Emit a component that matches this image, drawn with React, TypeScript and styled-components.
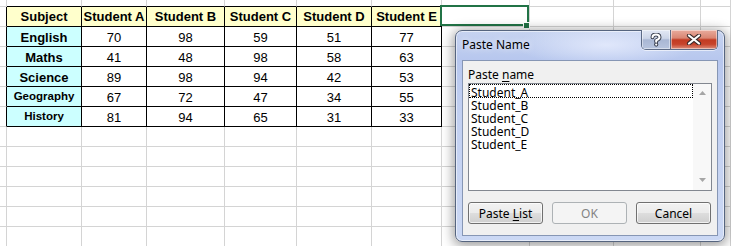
import React from 'react';
import styled, { createGlobalStyle, css } from 'styled-components';

const GlobalStyle = createGlobalStyle`
  html, body { margin: 0; padding: 0; background: #fff; overflow: hidden; }
  body { font-family: "Liberation Sans", Arial, sans-serif; }
`;

const Screen = styled.div`
  position: relative;
  width: 731px;
  height: 246px;
  overflow: hidden;
  background: #fff;
`;

const Sheet = styled.div`
  display: grid;
  grid-template-columns: 7px 75px 65px 78px 72px 75px 70px 88px 84px 87px 1fr;
  grid-template-rows: 7px repeat(12, 20px);
`;

type CellProps = {
  $bg?: string;
  $rb?: boolean;
  $bb?: boolean;
  $bold?: boolean;
  $size?: number;
  $pb?: number;
  $sel?: boolean;
};

const Cell = styled.div<CellProps>`
  box-sizing: border-box;
  border-right: 1px solid ${(p) => (p.$rb ? '#000' : '#d4d4d4')};
  border-bottom: 1px solid ${(p) => (p.$bb ? '#000' : '#d4d4d4')};
  background: ${(p) => p.$bg || '#fff'};
  display: flex;
  align-items: flex-end;
  justify-content: center;
  padding-bottom: ${(p) => p.$pb ?? 1}px;
  font-family: "Liberation Sans", Arial, sans-serif;
  font-size: ${(p) => p.$size ?? 13}px;
  font-weight: ${(p) => (p.$bold ? 700 : 400)};
  line-height: 15px;
  color: #000;
  white-space: nowrap;
  ${(p) =>
    p.$sel &&
    css`
      position: relative;
      z-index: 2;
      &::before {
        content: '';
        position: absolute;
        top: -2px;
        left: -2px;
        right: 0;
        bottom: 0;
        border: 2px solid #217346;
      }
      &::after {
        content: '';
        position: absolute;
        right: -1px;
        bottom: -3px;
        width: 5px;
        height: 5px;
        background: #217346;
        border: 1px solid #fff;
      }
    `}
`;

const headers = ['Subject', 'Student A', 'Student B', 'Student C', 'Student D', 'Student E'];
const rows: [string, number[]][] = [
  ['English', [70, 98, 59, 51, 77]],
  ['Maths', [41, 48, 98, 58, 63]],
  ['Science', [89, 98, 94, 42, 53]],
  ['Geography', [67, 72, 47, 34, 55]],
  ['History', [81, 94, 65, 31, 33]],
];
const smallSubjects = new Set(['Geography', 'History']);

/* ---------- Dialog ---------- */

const Dialog = styled.div`
  position: absolute;
  left: 455px;
  top: 30px;
  width: 270px;
  height: 212px;
  box-sizing: border-box;
  border: 1px solid #56657f;
  border-radius: 7px;
  background:
    radial-gradient(ellipse 90px 22px at 150px 14px, rgba(235, 240, 255, 0.75), rgba(235, 240, 255, 0) 100%),
    linear-gradient(180deg, #c6d3f0 0%, #b7c7ee 14%, #c2d0f1 40%, #cbd8f4 100%);
  box-shadow: 0 2px 12px 2px rgba(0, 0, 0, 0.38), inset 0 0 0 1px rgba(255, 255, 255, 0.55);
  display: flex;
  flex-direction: column;
  font-family: "Segoe UI", "Noto Sans", sans-serif;
  font-size: 12px;
  color: #000;
  z-index: 5;
`;

const TitleBar = styled.div`
  height: 29px;
  flex: none;
  display: flex;
  justify-content: space-between;
  align-items: flex-start;
`;

const Title = styled.div`
  padding: 6px 0 0 6px;
  line-height: 15px;
  text-shadow: 0 0 6px rgba(255, 255, 255, 0.9);
`;

const CaptionGroup = styled.div`
  display: flex;
  margin: -1px 6px 0 0;
  border: 1px solid #5d6b86;
  border-top: none;
  border-radius: 0 0 5px 5px;
  overflow: hidden;
  box-shadow: 0 1px 0 rgba(255, 255, 255, 0.6);
`;

const CaptionButton = styled.div<{ $close?: boolean }>`
  height: 19px;
  width: ${(p) => (p.$close ? 46 : 28)}px;
  display: flex;
  align-items: center;
  justify-content: center;
  box-shadow: inset 0 0 0 1px rgba(255, 255, 255, 0.45);
  background: ${(p) =>
    p.$close
      ? 'linear-gradient(180deg, #e9ab9d 0%, #da8673 42%, #c23b23 52%, #c7442c 75%, #dc8f7d 100%)'
      : 'linear-gradient(180deg, #e2e8f4 0%, #ccd5e8 44%, #a9b7d4 52%, #b7c4de 100%)'};
  & + & {
    border-left: 1px solid #5d6b86;
  }
`;

const Client = styled.div`
  flex: 1;
  margin: 0 6px 5px 6px;
  border: 1px solid #8696b4;
  background: #f0f0f0;
  padding: 6px 5px 0 5px;
  display: flex;
  flex-direction: column;
`;

const Label = styled.div`
  line-height: 15px;
  margin-bottom: 1px;
  u { text-decoration: underline; text-underline-offset: 2px; }
`;

const ListBox = styled.div`
  height: 108px;
  box-sizing: border-box;
  border: 1px solid #828790;
  background: #fff;
  display: flex;
`;

const Items = styled.div`
  flex: 1;
  display: flex;
  flex-direction: column;
  padding-top: 2px;
`;

const Item = styled.div<{ $focus?: boolean }>`
  position: relative;
  height: 13px;
  line-height: 13px;
  padding-left: 2px;
  white-space: nowrap;
  ${(p) =>
    p.$focus &&
    css`
      &::before {
        content: '';
        position: absolute;
        left: 0;
        right: 0;
        top: -2px;
        height: 14px;
        box-sizing: border-box;
        border: 1px dotted #000;
      }
    `}
`;

const ScrollBar = styled.div`
  width: 18px;
  flex: none;
  background: #f8f8f8;
  display: flex;
  flex-direction: column;
  justify-content: space-between;
  align-items: center;
  padding: 7px 0 8px;
  box-sizing: border-box;
`;

const ButtonRow = styled.div`
  display: flex;
  gap: 9px;
  margin-top: 11px;
`;

const Button = styled.div<{ $disabled?: boolean }>`
  width: 75px;
  height: 22px;
  box-sizing: border-box;
  border-radius: 3px;
  display: flex;
  align-items: center;
  justify-content: center;
  line-height: 15px;
  ${(p) =>
    p.$disabled
      ? css`
          border: 1px solid #adb2b5;
          background: #f4f4f4;
          color: #838383;
        `
      : css`
          border: 1px solid #707070;
          background: linear-gradient(180deg, #f2f2f2 0%, #ebebeb 48%, #dddddd 52%, #cfcfcf 100%);
          box-shadow: inset 0 0 0 1px rgba(255, 255, 255, 0.7);
          color: #000;
        `}
  u { text-decoration: underline; text-underline-offset: 2px; }
`;

const HelpIcon = () => (
  <svg width="12" height="14" viewBox="0 0 12 14">
    <path d="M2.5 4.2 Q2.5 1.5 6 1.5 Q9.5 1.5 9.5 4.3 Q9.5 6.2 6.2 7.3 L6.2 8.8" fill="none" stroke="#3a4050" strokeWidth="4" strokeLinecap="round" strokeLinejoin="round" />
    <circle cx="6.2" cy="11.6" r="2.1" fill="#3a4050" />
    <path d="M2.5 4.2 Q2.5 1.5 6 1.5 Q9.5 1.5 9.5 4.3 Q9.5 6.2 6.2 7.3 L6.2 8.8" fill="none" stroke="#fff" strokeWidth="2" strokeLinecap="round" strokeLinejoin="round" />
    <circle cx="6.2" cy="11.6" r="1.1" fill="#fff" />
  </svg>
);

const CloseIcon = () => (
  <svg width="16" height="11" viewBox="0 0 16 11">
    <path d="M3 1.5 L13 9.5 M13 1.5 L3 9.5" stroke="#3a2a2a" strokeWidth="4.2" strokeLinecap="round" />
    <path d="M3 1.5 L13 9.5 M13 1.5 L3 9.5" stroke="#fff" strokeWidth="2.2" strokeLinecap="round" />
  </svg>
);

const Arrow = ({ up }: { up?: boolean }) => (
  <svg width="7" height="4" viewBox="0 0 7 4">
    <path d={up ? 'M0 4 L3.5 0 L7 4 Z' : 'M0 0 L7 0 L3.5 4 Z'} fill="#a6a6a6" />
  </svg>
);

const names = ['Student_A', 'Student_B', 'Student_C', 'Student_D', 'Student_E'];

export default function App() {
  const cells: React.ReactNode[] = [];
  for (let r = 0; r < 13; r++) {
    for (let c = 0; c < 11; c++) {
      const inTable = r >= 1 && r <= 6 && c >= 1 && c <= 6;
      const rb = inTable || (c === 0 && r >= 1 && r <= 6);
      const bb = inTable || (r === 0 && c >= 1 && c <= 6);
      let bg: string | undefined;
      let text: React.ReactNode = null;
      let bold = false;
      let size = 13;
      let pb = 1;
      if (inTable) {
        if (r === 1) {
          bg = '#ffffcc';
          text = headers[c - 1];
          bold = true;
          pb = 2;
        } else {
          const [subj, vals] = rows[r - 2];
          if (c === 1) {
            bg = '#ccffff';
            text = subj;
            bold = true;
            if (smallSubjects.has(subj)) {
              size = 11.5;
              pb = 2;
            }
          } else {
            text = vals[c - 2];
          }
        }
      }
      cells.push(
        <Cell key={`${r}-${c}`} $bg={bg} $rb={rb} $bb={bb} $bold={bold} $size={size} $pb={pb} $sel={r === 1 && c === 7}>
          {text}
        </Cell>
      );
    }
  }

  return (
    <>
      <GlobalStyle />
      <Screen>
        <Sheet>{cells}</Sheet>
        <Dialog>
          <TitleBar>
            <Title>Paste Name</Title>
            <CaptionGroup>
              <CaptionButton>
                <HelpIcon />
              </CaptionButton>
              <CaptionButton $close>
                <CloseIcon />
              </CaptionButton>
            </CaptionGroup>
          </TitleBar>
          <Client>
            <Label>
              Paste <u>n</u>ame
            </Label>
            <ListBox>
              <Items>
                {names.map((n, i) => (
                  <Item key={n} $focus={i === 0}>
                    {n}
                  </Item>
                ))}
              </Items>
              <ScrollBar>
                <Arrow up />
                <Arrow />
              </ScrollBar>
            </ListBox>
            <ButtonRow>
              <Button>
                <span>
                  Paste <u>L</u>ist
                </span>
              </Button>
              <Button $disabled>OK</Button>
              <Button>Cancel</Button>
            </ButtonRow>
          </Client>
        </Dialog>
      </Screen>
    </>
  );
}
